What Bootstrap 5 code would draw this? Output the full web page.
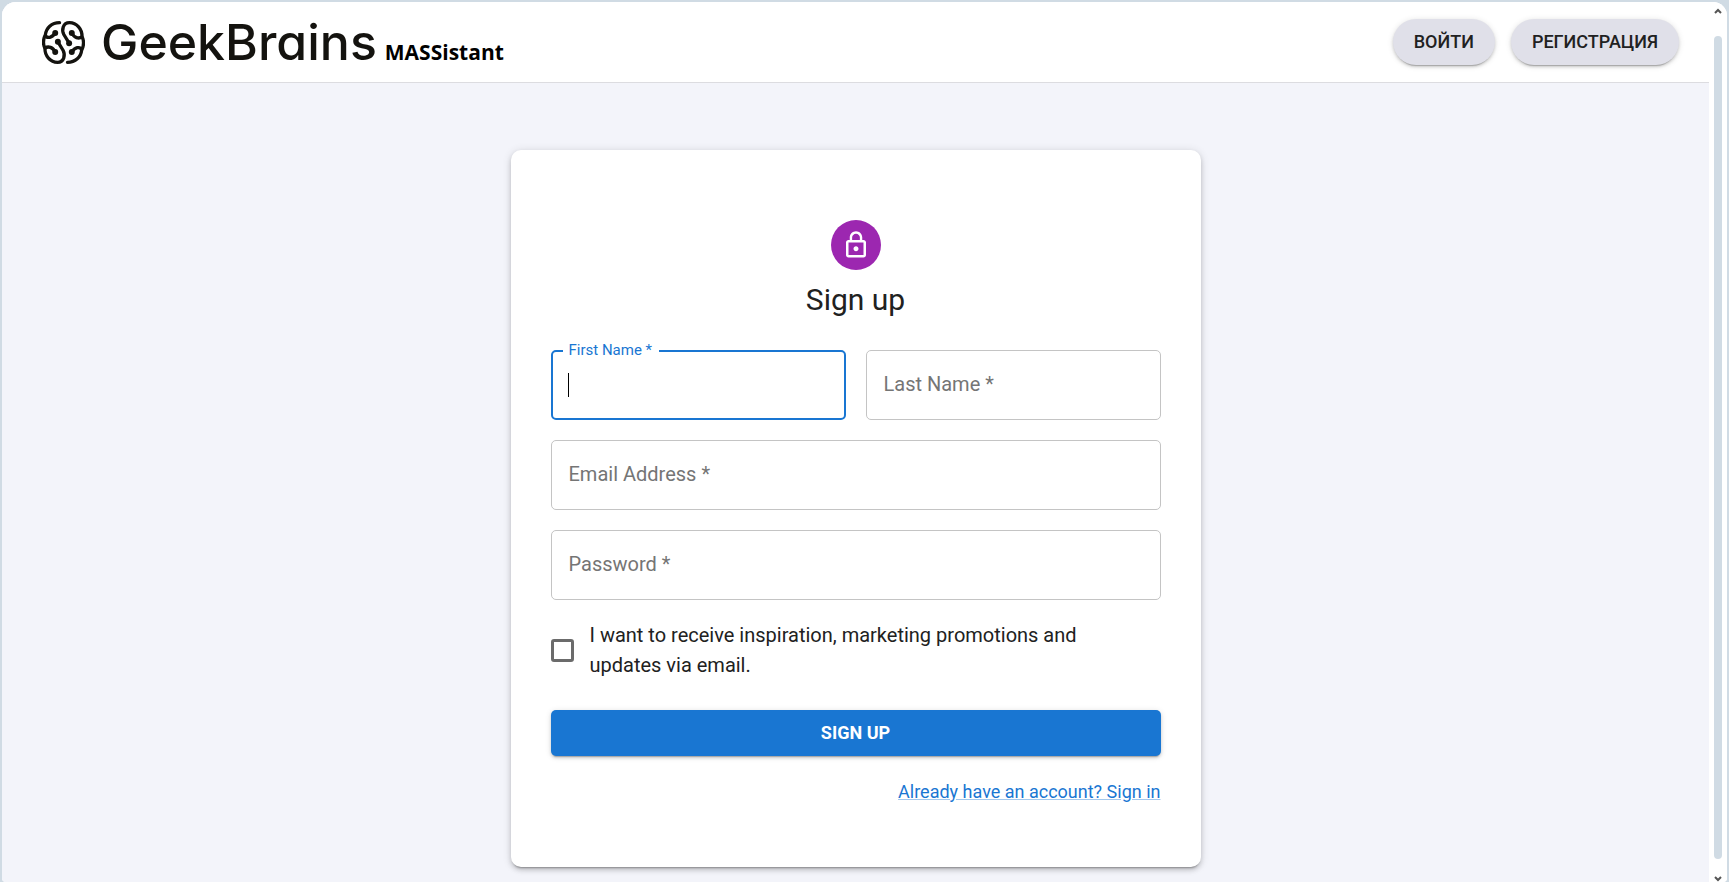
<!DOCTYPE html>
<html lang="ru">
<head>
<meta charset="utf-8">
<meta name="viewport" content="width=device-width, initial-scale=1">
<title>GeekBrains MASSistant</title>
<link href="https://cdn.jsdelivr.net/npm/bootstrap@5.3.0/dist/css/bootstrap.min.css" rel="stylesheet">
<style>
  :root { --ink: #212121; --blue: #1976d2; --frame: #d0dbe4; }
  body { font-family: Roboto, "Liberation Sans", sans-serif; font-size: 20px; line-height: 30px; color: var(--ink); background: var(--frame); }
  .frame { height: 100vh; padding: 2px 2px 0; }
  .window { background: #fff; border-radius: 14px 14px 4px 4px; }
  .page { background: #f3f4fa; min-width: 0; }
  .topbar { background: #fff; height: 81px; border-bottom: 1px solid #dcdce0; padding: 0 30px 0 40px; }
  .brand-name { font-family: Inter, "Open Sans", sans-serif; font-feature-settings: "cv11"; font-size: 50px; line-height: 56px; font-weight: 500; color: #14130f; }
  .brand-sub { font-family: "Comic Sans MS", "Open Sans", sans-serif; font-size: 21px; font-weight: 700; color: #000; }
  .pill { font-size: 18px; line-height: 30px; font-weight: 500; padding: 8px 21px; border: 0; color: var(--ink); background: #e0e0e9; }
  .raised { box-shadow: 0 3px 1px -2px rgba(0,0,0,.2), 0 2px 3px rgba(0,0,0,.14), 0 1px 6px rgba(0,0,0,.12); }
  .signup { width: 690px; max-width: 100%; margin: 67px auto 16px; padding: 70px 40px 60px; border: 0; border-radius: 10px; box-shadow: 0 3px 2px -2px rgba(0,0,0,.3), 0 3px 5px rgba(0,0,0,.16), 0 1px 10px rgba(0,0,0,.12); }
  .avatar { width: 50px; height: 50px; background: #9c27b0; margin: 0 auto 10px; }
  h1 { font-size: 30px; line-height: 40px; font-weight: 400; margin-bottom: 30px; text-align: center; }
  .fields { --bs-gutter-x: 20px; --bs-gutter-y: 20px; }
  .field input { height: 70px; border: 1px solid #c4c4c4; border-radius: 5px; padding: 0 16px; font-size: 20px; box-shadow: none; }
  .field label { position: absolute; left: 18px; top: 19px; color: #757575; pointer-events: none; }
  .field.active input { border: 2px solid var(--blue); background: linear-gradient(#000, #000) 15px 50% / 1px 24px no-repeat #fff; caret-color: transparent; }
  .field.active label { left: 12px; top: -15px; padding: 0 7px 0 6px; background: #fff; color: var(--blue); font-size: 15px; }
  .form-check-input.tick { width: 23px; height: 23px; border: 3px solid #6b6b6b; border-radius: 3px; margin: 0; }
  .promo-text { max-width: 530px; }
  .submit { height: 46px; padding: 0; border: 0; border-radius: 5px; font-size: 18px; line-height: 28px; font-weight: 700; background: var(--blue); margin: 30px 0 20px; }
  .signin { font-size: 18px; color: var(--blue); text-decoration-color: rgba(25,118,210,.4); }
  .rail { width: 18px; background: #fff; }
  .rail svg { display: block; width: 8px; height: 6px; }
  .rail-up { height: 34px; padding-top: 6px; }
  .rail-down { height: 23px; padding-top: 17px; }
  .thumb { width: 8px; border-radius: 4px; background: var(--frame); }
</style>
</head>
<body>
<div class="frame">
  <div class="window d-flex h-100 overflow-hidden">
    <div class="page flex-grow-1 overflow-hidden">
      <header class="topbar d-flex align-items-center justify-content-between">
        <a href="#" class="d-flex align-items-center text-decoration-none">
          <svg width="43" height="43" viewBox="-65 -65 130 130" fill="none" stroke="#14130f" stroke-width="10" stroke-linecap="round" aria-hidden="true">
            <g id="half">
              <path d="M-12-60C-36-60-53-44-55-22C-50-11-34-14-25-29"/>
              <path d="M-56-20C-62-10-62 8-56 17C-46 10-32 14-25 29"/>
              <path d="M-56 17C-57 40-40 60-18 60C2 60 6 38-1 24L-17-2"/>
              <g fill="#14130f" stroke="none"><circle cx="-25" cy="-29" r="9"/><circle cx="-25" cy="29" r="9"/><circle cx="-17" cy="-2" r="9"/></g>
            </g>
            <use href="#half" transform="rotate(180)"/>
          </svg>
          <span class="d-flex align-items-baseline gap-2 ms-3"><span class="brand-name">GeekBrains</span><span class="brand-sub">MASSistant</span></span>
        </a>
        <nav class="d-flex gap-3">
          <button type="button" class="btn rounded-pill pill raised">ВОЙТИ</button>
          <button type="button" class="btn rounded-pill pill raised">РЕГИСТРАЦИЯ</button>
        </nav>
      </header>
      <main>
        <form class="card signup">
          <div class="avatar rounded-circle d-flex align-items-center justify-content-center">
            <svg width="30" height="30" viewBox="0 0 24 24" fill="#fff" aria-hidden="true"><path d="M12 17c1.1 0 2-.9 2-2s-.9-2-2-2-2 .9-2 2 .9 2 2 2zm6-9h-1V6c0-2.760-2.240-5-5-5S7 3.240 7 6v2H6c-1.100 0-2 .9-2 2v10c0 1.100.9 2 2 2h12c1.100 0 2-.9 2-2V10c0-1.100-.9-2-2-2zM8.900 6c0-1.710 1.390-3.100 3.100-3.100s3.100 1.390 3.100 3.100v2H8.900V6zM18 20H6V10h12v10z"/></svg>
          </div>
          <h1>Sign up</h1>
          <div class="row fields">
            <div class="col-6"><div class="field active position-relative"><input id="first" type="text" class="form-control" required><label for="first">First Name *</label></div></div>
            <div class="col-6"><div class="field position-relative"><input id="last" type="text" class="form-control" required><label for="last">Last Name *</label></div></div>
            <div class="col-12"><div class="field position-relative"><input id="email" type="email" class="form-control" required><label for="email">Email Address *</label></div></div>
            <div class="col-12"><div class="field position-relative"><input id="password" type="password" class="form-control" required><label for="password">Password *</label></div></div>
            <div class="col-12 d-flex align-items-center gap-3">
              <input id="promo" type="checkbox" class="form-check-input tick flex-shrink-0">
              <label for="promo" class="promo-text">I want to receive inspiration, marketing promotions and updates via email.</label>
            </div>
          </div>
          <button type="submit" class="btn btn-primary submit raised">SIGN UP</button>
          <div class="text-end"><a href="#" class="signin">Already have an account? Sign in</a></div>
        </form>
      </main>
    </div>
    <div class="rail d-flex flex-column align-items-center flex-shrink-0" aria-hidden="true">
      <div class="rail-up"><svg viewBox="0 0 8 6" fill="none" stroke="#555" stroke-width="2"><path d="M1 5l3-3 3 3"/></svg></div>
      <div class="thumb flex-grow-1"></div>
      <div class="rail-down"><svg viewBox="0 0 8 6" fill="none" stroke="#555" stroke-width="2"><path d="M1 1l3 3 3-3"/></svg></div>
    </div>
  </div>
</div>
<script src="https://cdn.jsdelivr.net/npm/bootstrap@5.3.0/dist/js/bootstrap.bundle.min.js"></script>
</body>
</html>
